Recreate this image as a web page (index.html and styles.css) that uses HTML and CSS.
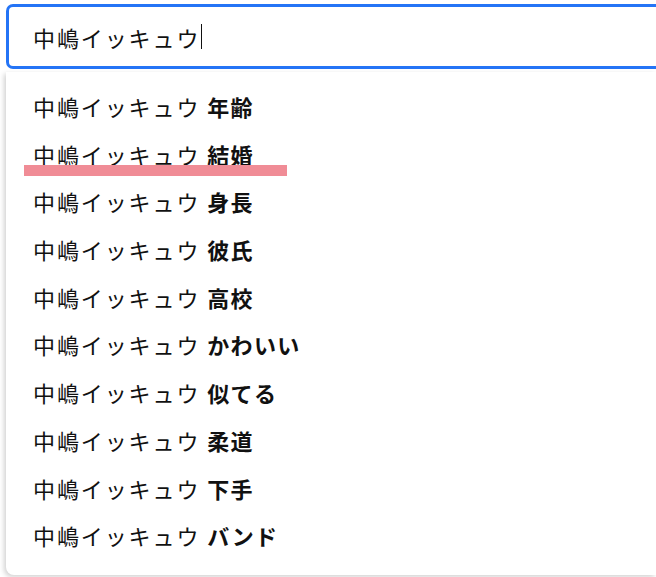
FILE: index.html
```html
<!DOCTYPE html>
<html lang="ja">
<head>
    <meta charset="UTF-8">
    <title>検索候補</title>
    <link rel="stylesheet" href="styles.css">
</head>
<body>
    <div class="search">
        <span class="query">中嶋イッキュウ</span><span class="caret"></span>
    </div>

    <ul class="suggest">
        <li>中嶋イッキュウ <b>年齢</b></li>
        <li>中嶋イッキュウ <b>結婚</b></li>
        <li>中嶋イッキュウ <b>身長</b></li>
        <li>中嶋イッキュウ <b>彼氏</b></li>
        <li>中嶋イッキュウ <b>高校</b></li>
        <li>中嶋イッキュウ <b>かわいい</b></li>
        <li>中嶋イッキュウ <b>似てる</b></li>
        <li>中嶋イッキュウ <b>柔道</b></li>
        <li>中嶋イッキュウ <b>下手</b></li>
        <li>中嶋イッキュウ <b>バンド</b></li>
        <span class="marker"></span>
    </ul>
</body>
</html>
```

FILE: styles.css
```css
html, body {
    margin: 0;
    padding: 0;
    overflow: hidden;
}

body {
    font-family: "Noto Sans CJK JP", "Noto Sans", sans-serif;
    background-color: #fff;
    color: #111;
    width: 656px;
    height: 577px;
}

.search {
    margin: 4px 0 0 6px;
    height: 59px;
    border: 3px solid #2474f6;
    border-right: none;
    border-radius: 7px 0 0 7px;
    display: flex;
    align-items: center;
    padding-left: 24px;
    font-size: 22px;
    letter-spacing: 1.9px;
}

.caret {
    display: inline-block;
    width: 1px;
    height: 25px;
    background-color: #111;
    margin-left: 1px;
}

.suggest {
    position: relative;
    list-style: none;
    margin: 3px 0 0 6px;
    padding: 11px 0 0 0;
    height: 492px;
    background-color: #fff;
    border-radius: 0 0 0 8px;
    box-shadow: -2px 2px 5px rgba(0, 0, 0, 0.18);
}

.suggest li {
    height: 47.7px;
    line-height: 47.7px;
    padding-left: 27px;
    font-size: 22px;
    letter-spacing: 1.9px;
}

.suggest li b {
    font-weight: bold;
    letter-spacing: 1.4px;
}

.marker {
    position: absolute;
    left: 18px;
    top: 93px;
    width: 263px;
    height: 11px;
    background-color: #f08c96;
}
```
